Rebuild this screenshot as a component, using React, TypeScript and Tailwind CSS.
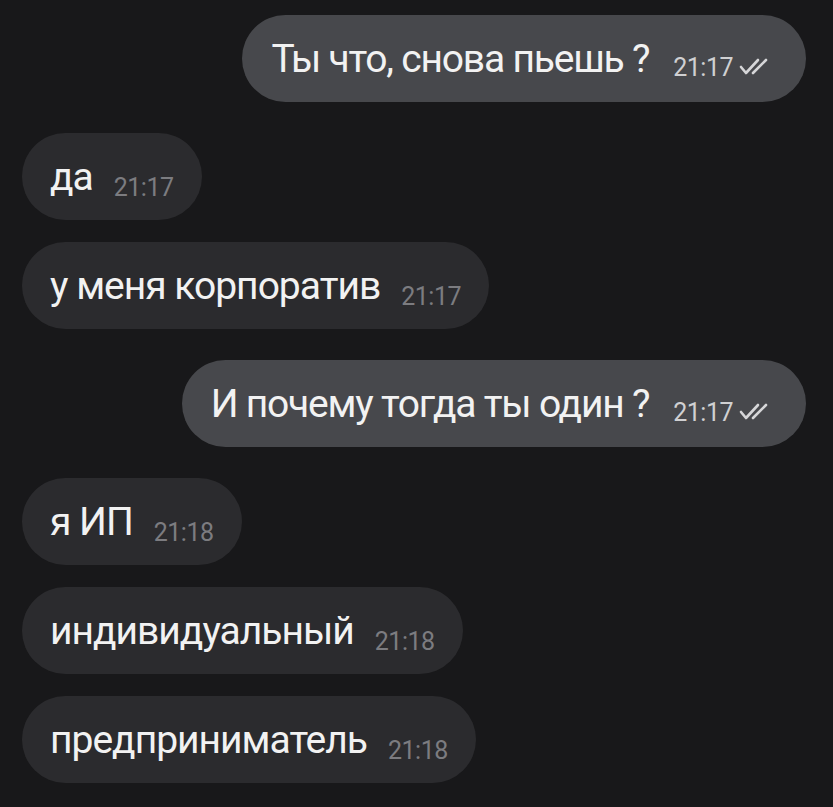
const messages = [
  { text: 'Ты что, снова пьешь ?', time: '21:17', out: true },
  { text: 'да', time: '21:17', out: false },
  { text: 'у меня корпоратив', time: '21:17', out: false },
  { text: 'И почему тогда ты один ?', time: '21:17', out: true },
  { text: 'я ИП', time: '21:18', out: false },
  { text: 'индивидуальный', time: '21:18', out: false },
  { text: 'предприниматель', time: '21:18', out: false },
];

const Ticks = () => (
  <svg width="32" height="20" viewBox="0 0 32 20" fill="none" stroke="#d6d6d8" strokeWidth="2.6" strokeLinecap="round" strokeLinejoin="round">
    <path d="M3 11 L8 17 L20 4" />
    <path d="M15 17 L28 4" />
  </svg>
);

export default function App() {
  return (
    <div
      className="min-h-screen w-full bg-[#18181a] pt-[15px] pl-[22px] pr-[27px] flex flex-col"
      style={{ fontFamily: 'Roboto, "Noto Sans", sans-serif' }}
    >
      {messages.map((m, i) => {
        const prev = messages[i - 1];
        const gap = i === 0 ? '' : prev.out !== m.out ? 'mt-[31px]' : 'mt-[22px]';
        return (
          <div key={i} className={`flex ${m.out ? 'justify-end' : 'justify-start'} ${gap}`}>
            {m.out ? (
              <div className="h-[87px] rounded-full bg-[#47484c] pl-[29px] pr-[36px] flex items-center">
                <span className="text-[39px] leading-none text-[#f2f2f2] tracking-[-1.2px] translate-y-[1px]">{m.text}</span>
                <span className="ml-[24px] text-[25px] leading-none text-[#d0d0d2] tracking-[-0.5px] translate-y-[9px]">{m.time}</span>
                <span className="ml-[5px] translate-y-[7px]">
                  <Ticks />
                </span>
              </div>
            ) : (
              <div className="h-[87px] rounded-full bg-[#2b2b2e] pl-[28px] pr-[28px] flex items-center">
                <span className="text-[39px] leading-none text-[#f2f2f2] tracking-[-1px] translate-y-[1px]">{m.text}</span>
                <span className="ml-[21px] text-[25px] leading-none text-[#7c7c80] tracking-[-0.5px] translate-y-[11px]">{m.time}</span>
              </div>
            )}
          </div>
        );
      })}
    </div>
  );
}
